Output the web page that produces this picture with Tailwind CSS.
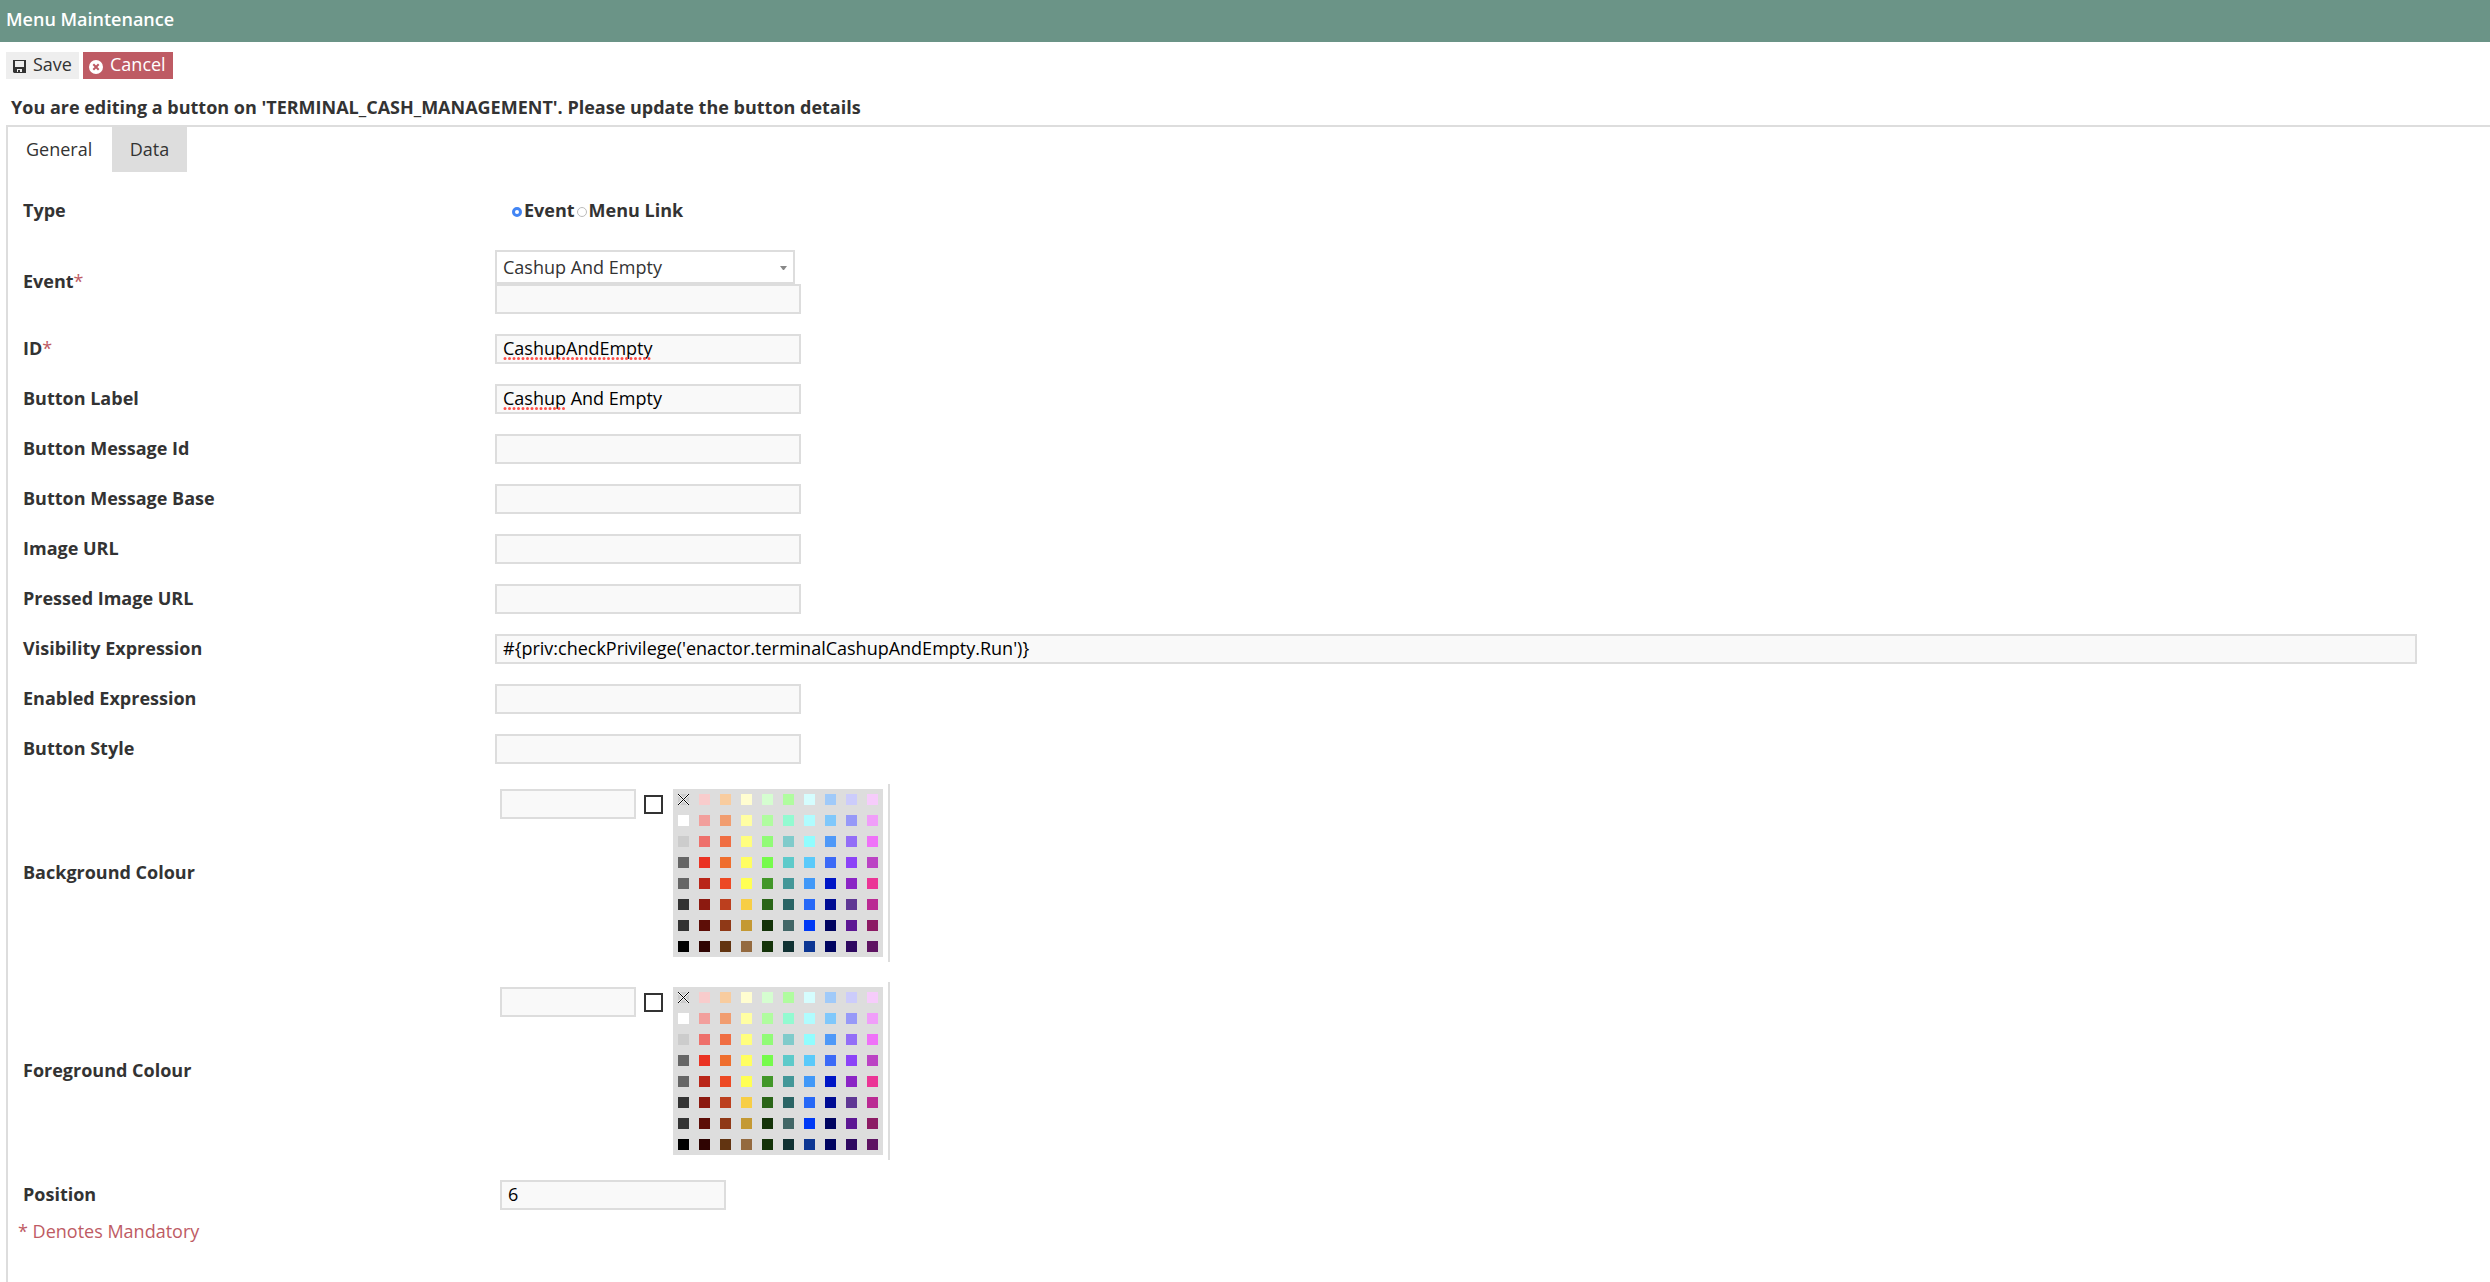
<!DOCTYPE html>
<html lang="en">
<head>
<meta charset="utf-8">
<title>Menu Maintenance</title>
<script src="https://cdn.jsdelivr.net/npm/@tailwindcss/browser@4"></script>
</head>
<body class="flex min-h-screen flex-col bg-white font-['Open_Sans',sans-serif] text-[18px] leading-6 text-[#333]">
<header class="flex h-[42px] items-center bg-[#6b9487] px-1.5 pb-1">
  <h1 class="font-semibold text-white">Menu Maintenance</h1>
</header>

<div class="flex gap-1 px-1.5 pt-2.5">
  <button type="button" class="flex h-[27px] w-[73px] items-center gap-[7px] bg-[#eee] pb-1 pl-[7px]">
    <svg class="mt-1.5 size-[13px]" viewBox="0 0 13 13" aria-hidden="true"><path fill="#333" fill-rule="evenodd" d="M0 0H13V13H1L0 12ZM2 1V7H11V1ZM4 9V12H9V9Z"/><path fill="#333" d="M5 10H7V12H5Z"/></svg>
    <span>Save</span>
  </button>
  <button type="button" class="flex h-[27px] w-[90px] items-center gap-[7px] bg-[#be5b64] pb-1 pl-1.5 text-white">
    <svg class="mt-1.5 size-[14px]" viewBox="0 0 14 14" aria-hidden="true"><circle cx="7" cy="7" r="7" fill="#fff"/><path d="M4.3 4.3 9.7 9.7M9.7 4.3 4.3 9.7" stroke="#be5b64" stroke-width="2"/></svg>
    <span class="font-medium">Cancel</span>
  </button>
</div>

<h2 class="px-[11px] pt-4 pb-1.5 font-bold">You are editing a button on 'TERMINAL_CASH_MANAGEMENT'. Please update the button details</h2>

<main class="ml-1.5 flex-1 border-t-2 border-l-2 border-[#ddd]">
  <nav class="flex">
    <a href="#general" class="flex h-[45px] w-[104px] items-center pb-0.5 pl-[18px]">General</a>
    <a href="#data" class="flex h-[45px] w-[75px] items-center justify-center bg-[#ddd] pb-0.5">Data</a>
  </nav>

  <form class="pt-2.5">
    <fieldset class="flex h-[58px] items-center pb-0.5">
      <legend class="float-left w-[472px] pl-[15px] font-bold">Type</legend>
      <div class="flex items-center pl-8 font-bold">
        <input id="t1" type="radio" name="type" checked class="mt-1 mr-0.5 size-2.5 appearance-none rounded-full border border-[#bbb] bg-white checked:border-[3px] checked:border-[#4285f4]">
        <label for="t1" class="mr-0.5">Event</label>
        <input id="t2" type="radio" name="type" class="mt-1 mr-0.5 size-2.5 appearance-none rounded-full border border-[#bbb] bg-white checked:border-[3px] checked:border-[#4285f4]">
        <label for="t2">Menu Link</label>
      </div>
    </fieldset>

    <div class="flex items-center py-2.5">
      <label for="event" class="w-[487px] shrink-0 pb-0.5 pl-[15px] font-bold">Event<span class="font-normal text-[#be5b64]">*</span></label>
      <div>
        <div class="relative w-[300px]">
          <select id="event" class="block h-[34px] w-full appearance-none border-2 border-[#ddd] bg-white px-1.5"><option>Cashup And Empty</option></select>
          <svg class="pointer-events-none absolute top-4 right-2 h-1 w-[7px]" viewBox="0 0 7 4" aria-hidden="true"><path d="M0 0H7L4 4H3Z" fill="#888"/></svg>
        </div>
        <input type="text" aria-label="Event filter" class="block h-[30px] w-[306px] border-2 border-[#ddd] bg-[#f9f9f9] px-1.5 text-black">
      </div>
    </div>

    <div class="flex items-center py-2.5">
      <label for="id" class="w-[487px] shrink-0 pb-0.5 pl-[15px] font-bold">ID<span class="font-normal text-[#be5b64]">*</span></label>
      <div class="relative">
        <input id="id" type="text" value="CashupAndEmpty" class="block h-[30px] w-[306px] border-2 border-[#ddd] bg-[#f9f9f9] px-1.5 pb-0.5 text-black">
        <svg class="pointer-events-none absolute bottom-1 left-2 h-[3px] w-[150px]" aria-hidden="true"><path d="M2 1.5H149" stroke="#ff4f4a" stroke-width="3" stroke-linecap="round" stroke-dasharray="0 4.5"/></svg>
      </div>
    </div>
    <div class="flex items-center py-2.5">
      <label for="label" class="w-[487px] shrink-0 pb-0.5 pl-[15px] font-bold">Button Label</label>
      <div class="relative">
        <input id="label" type="text" value="Cashup And Empty" class="block h-[30px] w-[306px] border-2 border-[#ddd] bg-[#f9f9f9] px-1.5 pb-0.5 text-black">
        <svg class="pointer-events-none absolute bottom-1 left-2 h-[3px] w-[63px]" aria-hidden="true"><path d="M2 1.5H62" stroke="#ff4f4a" stroke-width="3" stroke-linecap="round" stroke-dasharray="0 4.5"/></svg>
      </div>
    </div>
    <div class="flex items-center py-2.5">
      <label for="msgid" class="w-[487px] shrink-0 pb-0.5 pl-[15px] font-bold">Button Message Id</label>
      <input id="msgid" type="text" class="h-[30px] w-[306px] border-2 border-[#ddd] bg-[#f9f9f9] px-1.5 pb-0.5 text-black">
    </div>
    <div class="flex items-center py-2.5">
      <label for="msgbase" class="w-[487px] shrink-0 pb-0.5 pl-[15px] font-bold">Button Message Base</label>
      <input id="msgbase" type="text" class="h-[30px] w-[306px] border-2 border-[#ddd] bg-[#f9f9f9] px-1.5 pb-0.5 text-black">
    </div>
    <div class="flex items-center py-2.5">
      <label for="img" class="w-[487px] shrink-0 pb-0.5 pl-[15px] font-bold">Image URL</label>
      <input id="img" type="text" class="h-[30px] w-[306px] border-2 border-[#ddd] bg-[#f9f9f9] px-1.5 pb-0.5 text-black">
    </div>
    <div class="flex items-center py-2.5">
      <label for="pimg" class="w-[487px] shrink-0 pb-0.5 pl-[15px] font-bold">Pressed Image URL</label>
      <input id="pimg" type="text" class="h-[30px] w-[306px] border-2 border-[#ddd] bg-[#f9f9f9] px-1.5 pb-0.5 text-black">
    </div>
    <div class="flex items-center py-2.5 pr-[73px]">
      <label for="vis" class="w-[487px] shrink-0 pb-0.5 pl-[15px] font-bold">Visibility Expression</label>
      <input id="vis" type="text" value="#{priv:checkPrivilege('enactor.terminalCashupAndEmpty.Run')}" class="h-[30px] min-w-0 flex-1 border-2 border-[#ddd] bg-[#f9f9f9] px-1.5 pb-0.5 text-black">
    </div>
    <div class="flex items-center py-2.5">
      <label for="en" class="w-[487px] shrink-0 pb-0.5 pl-[15px] font-bold">Enabled Expression</label>
      <input id="en" type="text" class="h-[30px] w-[306px] border-2 border-[#ddd] bg-[#f9f9f9] px-1.5 pb-0.5 text-black">
    </div>
    <div class="flex items-center py-2.5">
      <label for="style" class="w-[487px] shrink-0 pb-0.5 pl-[15px] font-bold">Button Style</label>
      <input id="style" type="text" class="h-[30px] w-[306px] border-2 border-[#ddd] bg-[#f9f9f9] px-1.5 pb-0.5 text-black">
    </div>

    <div class="flex items-center py-2.5">
      <label for="bg" class="w-[487px] shrink-0 pb-0.5 pl-[15px] font-bold">Background Colour</label>
      <div class="flex items-start border-r-2 border-[#ddd] p-[5px]">
        <input id="bg" type="text" class="h-[30px] w-[136px] border-2 border-[#ddd] bg-[#f9f9f9] px-1.5 pb-0.5 text-black">
        <span class="mt-1.5 ml-2 size-[19px] border-2 border-[#333]"></span>
        <div data-palette class="ml-2.5 grid grid-cols-10 gap-2.5 bg-[#ddd] p-[5px]"></div>
      </div>
    </div>
    <div class="flex items-center py-2.5">
      <label for="fg" class="w-[487px] shrink-0 pb-0.5 pl-[15px] font-bold">Foreground Colour</label>
      <div class="flex items-start border-r-2 border-[#ddd] p-[5px]">
        <input id="fg" type="text" class="h-[30px] w-[136px] border-2 border-[#ddd] bg-[#f9f9f9] px-1.5 pb-0.5 text-black">
        <span class="mt-1.5 ml-2 size-[19px] border-2 border-[#333]"></span>
        <div data-palette class="ml-2.5 grid grid-cols-10 gap-2.5 bg-[#ddd] p-[5px]"></div>
      </div>
    </div>

    <div class="flex items-center py-2.5">
      <label for="pos" class="w-[492px] shrink-0 pb-0.5 pl-[15px] font-bold">Position</label>
      <input id="pos" type="text" value="6" class="h-[30px] w-[226px] border-2 border-[#ddd] bg-[#f9f9f9] px-1.5 pb-0.5 text-black">
    </div>
    <p class="-mt-px pl-2.5 text-[#be5b64]">* Denotes Mandatory</p>
  </form>
</main>

<script>
const rows = [
  'none f8cccc f8cc9f fffdd0 d5fdd0 b0fc9f d5fdfe a0caf9 ccccfb f6ccfb',
  'ffffff f29f9c f19d70 fffea3 b0fc9f 93fad1 b0fcfe 80c8fb 9799f8 f09ef9',
  'cccccc ee706b f06e43 fffe7e 91fb77 80cbcb 91fdfe 4f99f8 936ef7 ef72f8',
  '666666 ea3323 ef6e2e fffe61 76fb4c 5dcaca 5acafa 3c6af7 8c43f7 bb43c4',
  '666666 b92619 ed4924 ffff54 429729 439798 4098f8 0016c6 8b25c5 eb3596',
  '333333 8c1a10 bc3f1e f7ce46 2a6518 2a6465 2668f7 000c93 5f3794 ba2a93',
  '333333 5d0e07 8f3917 c49933 143309 416666 003af5 000460 5c1793 8c1b64',
  '000000 2f0402 623411 946a3f 143309 113233 0c3693 000460 2e0860 5e1362'
];
for (const grid of document.querySelectorAll('[data-palette]')) {
  for (const c of rows.join(' ').split(' ')) {
    const b = document.createElement('button');
    b.type = 'button';
    b.className = 'block size-[11px]';
    b.ariaLabel = c === 'none' ? 'No colour' : '#' + c;
    b.style.backgroundColor = c === 'none' ? '#cccccc' : '#' + c;
    if (c === 'none') b.innerHTML = '<svg class="size-[11px]" viewBox="0 0 11 11"><path d="M0 0 11 11M11 0 0 11" stroke="#fff" stroke-width="2"/><path d="M0 0 11 11M11 0 0 11" stroke="#000"/></svg>';
    grid.append(b);
  }
}
</script>
</body>
</html>
